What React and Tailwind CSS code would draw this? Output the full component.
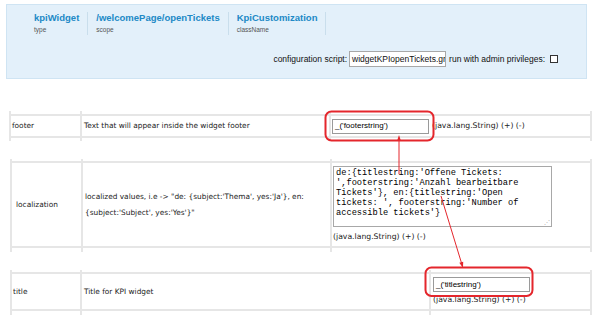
const line = "border-[#e6e6e6]";

// one table cell: vertical rule on the left, horizontal rules on the inner box
const Cell = ({ w, pad, last, children }) => (
  <div
    className={`${w} ${pad} border-l-2 ${line} ${last ? "border-r-2" : ""} flex shrink-0`}
  >
    <div className={`flex-1 border-y-2 ${line} flex items-center`}>{children}</div>
  </div>
);

const TypeInfo = () => (
  <span className="text-[7.7px] text-[#222] whitespace-nowrap">(java.lang.String) (+) (-)</span>
);

const Field = ({ value }) => (
  <div className="w-[97px] h-[15px] border border-[#9a9a9a] bg-white flex items-center pl-[2px] text-[8px] text-black font-['Liberation_Sans',sans-serif] shrink-0">
    {value}
  </div>
);

const Header = ({ value, label }) => (
  <div className="flex flex-col border-r border-[#c9deec] px-[8px] h-[23px]">
    <span className="text-[9.5px] leading-[12px] font-bold text-[#2189c6]">{value}</span>
    <span className="text-[6.5px] leading-[10px] text-[#555] mt-[1px]">{label}</span>
  </div>
);

export default function App() {
  return (
    <div className="relative w-[600px] h-[318px] bg-white overflow-hidden font-['DejaVu_Sans',sans-serif] text-[#222]">
      {/* definition panel */}
      <div className="ml-[6px] mt-[4px] w-[581px] h-[75px] border border-[#cfe4f3] bg-[#e3f0fa] font-['Liberation_Sans',sans-serif]">
        <div className="flex pl-[19px] pt-[7px]">
          <Header value="kpiWidget" label="type" />
          <Header value="/welcomePage/openTickets" label="scope" />
          <Header value="KpiCustomization" label="className" />
        </div>
        <div className="flex justify-end items-center pr-[28px] mt-[16px] text-[8.5px] text-[#111]">
          <span>configuration script:</span>
          <div className="ml-[2px] w-[97px] h-[16px] border border-[#a8a8a8] bg-white flex items-center pl-[2px] overflow-hidden whitespace-nowrap">
            widgetKPIopenTickets.gr
          </div>
          <span className="ml-[3px]">run with admin privileges:</span>
          <div className="ml-[5px] w-[8px] h-[8px] border border-[#333] bg-white" />
        </div>
      </div>

      {/* footer */}
      <div className="flex ml-[9px] mt-[32px] h-[30px] text-[7.4px]">
        <Cell w="w-[71px]" pad="py-[3px]">
          <span className="pl-[1px]">footer</span>
        </Cell>
        <Cell w="w-[249px]" pad="py-[3px]">
          <span className="pl-[2px]">Text that will appear inside the widget footer</span>
        </Cell>
        <Cell w="w-[263px]" pad="py-[3px]" last>
          <div className="flex items-center pl-[1px] gap-x-[3px]">
            <Field value="_('footerstring')" />
            <TypeInfo />
          </div>
        </Cell>
      </div>

      {/* localization */}
      <div className="flex ml-[10px] mt-[18px] h-[93px] text-[7.4px]">
        <Cell w="w-[71px]" pad="pt-[2px] pb-[4px]">
          <span className="pl-[4px]">localization</span>
        </Cell>
        <Cell w="w-[249px]" pad="pt-[2px] pb-[4px]">
          <span className="pl-[2px] leading-[16px]">
            localized values, i.e -&gt; "de: {"{"}subject:'Thema', yes:'Ja'{"}"}, en:
            <br />
            {"{"}subject:'Subject', yes:'Yes'{"}"}"
          </span>
        </Cell>
        <Cell w="w-[262px]" pad="pt-[2px] pb-[4px]" last>
          <div className="flex flex-col pl-[1px]">
            <div className="relative w-[219px] h-[61px] border border-[#a8a8a8] bg-white px-[2px] pt-[1px] font-['Liberation_Mono',monospace] text-[8.7px] leading-[10px] text-black whitespace-pre">
              {"de:{titlestring:'Offene Tickets:\n',footerstring:'Anzahl bearbeitbare\nTickets'}, en:{titlestring:'Open\ntickets: ', footerstring:'Number of\naccessible tickets'}"}
              <span className="absolute right-[1px] bottom-[0px] text-[6px] leading-[6px] text-[#aaa]">⋰</span>
            </div>
            <div className="mt-[4px]">
              <TypeInfo />
            </div>
          </div>
        </Cell>
      </div>

      {/* title */}
      <div className="flex ml-[10px] mt-[18px] h-[45px] text-[7.4px]">
        <Cell w="w-[70px]" pad="pt-[2px] pb-[4px]">
          <span className="pl-[1px]">title</span>
        </Cell>
        <Cell w="w-[349px]" pad="pt-[2px] pb-[4px]">
          <span className="pl-[2px]">Title for KPI widget</span>
        </Cell>
        <Cell w="w-[163px]" pad="pt-[2px] pb-[4px]" last>
          <div className="flex flex-col pl-[2px] gap-y-[2px]">
            <Field value="_('titlestring')" />
            <TypeInfo />
          </div>
        </Cell>
      </div>

      {/* annotations */}
      <svg className="absolute inset-0 pointer-events-none" width="600" height="318" viewBox="0 0 600 318">
        <rect x="325.5" y="111.5" width="108" height="29" rx="6" fill="none" stroke="#e4262c" strokeWidth="2" />
        <rect x="425.5" y="267.5" width="107" height="28.5" rx="6" fill="none" stroke="#e4262c" strokeWidth="2" />
        <line x1="399" y1="174" x2="399" y2="140" stroke="#e4262c" strokeWidth="1" />
        <polygon points="399,135 397,141 401,141" fill="#e4262c" />
        <line x1="441" y1="196" x2="461.5" y2="263" stroke="#e4262c" strokeWidth="1" />
        <polygon points="463,268 463.2,261.7 459.3,262.8" fill="#e4262c" />
      </svg>
    </div>
  );
}
